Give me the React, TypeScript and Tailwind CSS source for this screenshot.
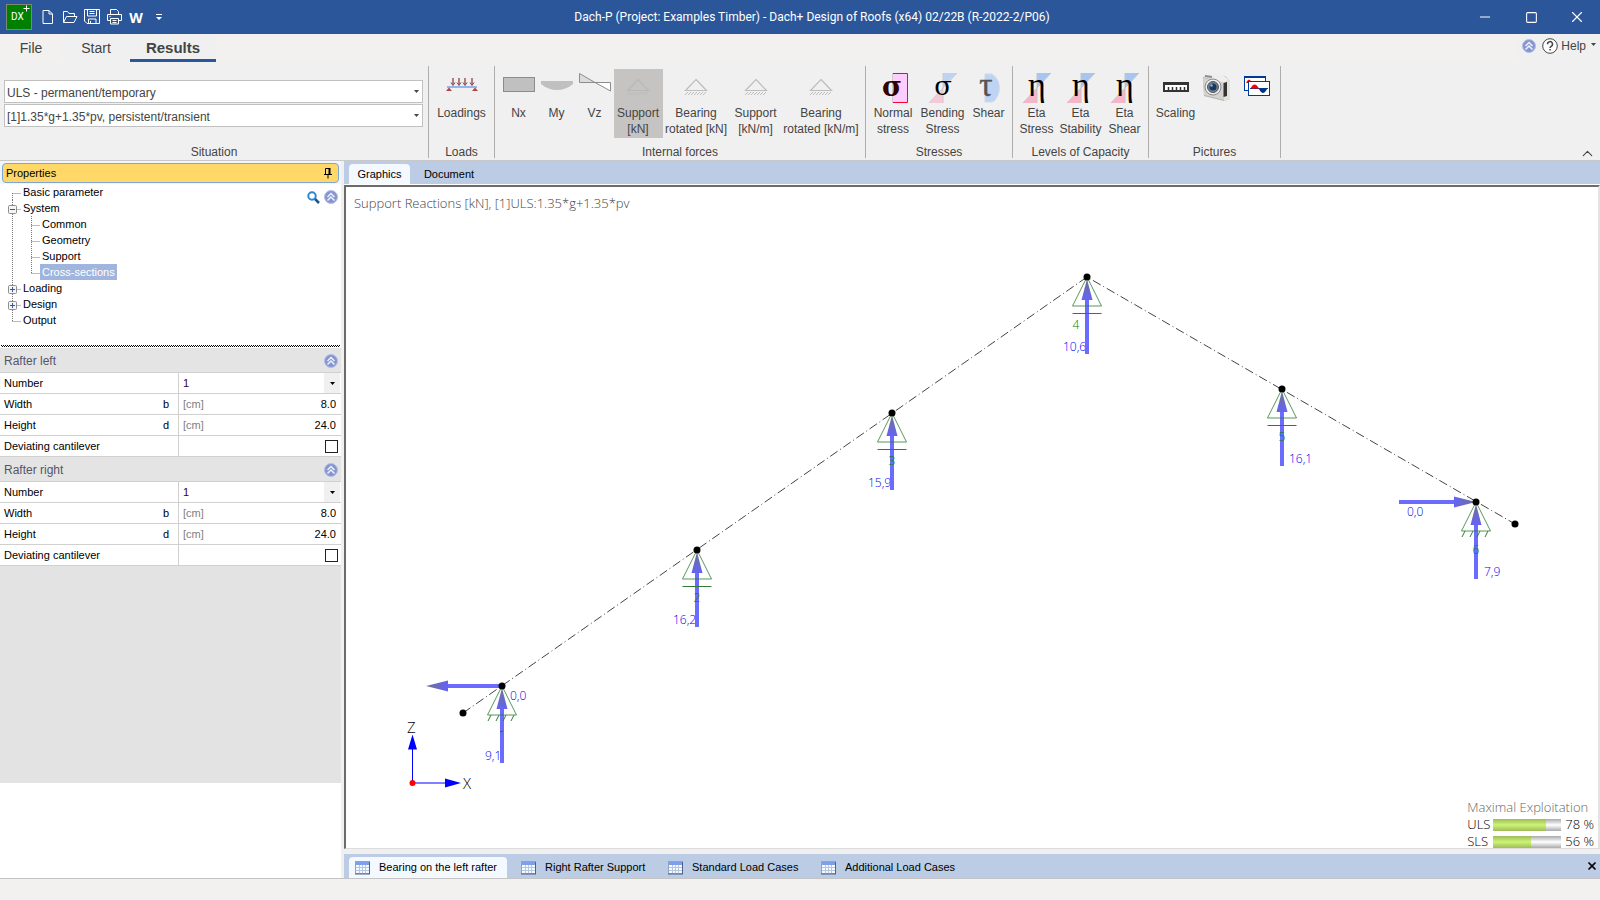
import React from 'react';
import { ChevronUp, Minus, Square, X } from 'lucide-react';

const Caret = ({ className = '' }: { className?: string }) => (
  <svg className={className} width="5" height="3" viewBox="0 0 5 3" aria-hidden="true">
    <path d="M0 0h5L2.5 3z" fill="currentColor" />
  </svg>
);

const CollapseBadge = () => (
  <svg width="14" height="14" viewBox="0 0 14 14" aria-hidden="true">
    <circle cx="7" cy="7" r="6.5" fill="#8a93cf" stroke="#a9c3e4" />
    <path d="M3.5 7L7 3.5 10.5 7M3.5 10.5L7 7l3.5 3.5" fill="none" stroke="#e8f4ff" strokeWidth="1.5" />
  </svg>
);

const TitleBar = () => (
  <header className="relative flex h-[34px] items-center bg-[#2b579a] text-white">
    <svg className="ml-1.5" width="26" height="26" viewBox="0 0 26 26" aria-hidden="true">
      <rect x="0.5" y="0.5" width="25" height="25" fill="#008000" stroke="#7b8a6b" />
      <text x="5" y="16" fontSize="10" fontFamily="Roboto, sans-serif" fill="#fff">DX</text>
      <path d="M20.5 1.5v6M17.5 4.5h6" stroke="#fff" />
    </svg>
    <nav className="ml-[5px] flex items-center" aria-label="Quick access">
      <button type="button" aria-label="New" className="flex w-[22px] justify-center">
        <svg width="12" height="16" viewBox="0 0 12 16" fill="none" stroke="#fff">
          <path d="M1 1.500h6l3.500 3.500v9.500H1zM7 1.500V5h3.500" />
        </svg>
      </button>
      <button type="button" aria-label="Open" className="flex w-[22px] justify-center">
        <svg width="16" height="14" viewBox="0 0 16 14" fill="none" stroke="#fff">
          <path d="M1.500 12.500v-11h4l1.500 2h5.500v3M1.500 12.500l3-6H15l-3 6z" />
        </svg>
      </button>
      <button type="button" aria-label="Save" className="flex w-[22px] justify-center">
        <svg width="16" height="16" viewBox="0 0 16 16" fill="none" stroke="#fff">
          <path d="M0.500 0.500h15v14H3l-2.500-2.500zM3.500 0.500v6.500h9v-6.500M4.500 14.500v-4.500h7.500v4.500M5.500 2.500h5M5.500 4.500h5M6.500 12v2" />
        </svg>
      </button>
      <button type="button" aria-label="Print" className="flex w-[22px] justify-center">
        <svg width="15" height="16" viewBox="0 0 15 16" fill="none" stroke="#fff">
          <path d="M3.500 5.500v-5h6l2 2v3M3.500 11.500h-3v-6h14v6h-3M3.500 9.500h8v5.500h-8zM5.500 11.500h4M5.500 13.500h4M2.500 7.500h1" />
        </svg>
      </button>
      <button type="button" className="w-[22px] text-center font-['Open_Sans',sans-serif] text-[14px] font-bold">W</button>
      <button type="button" aria-label="Customize" className="flex w-6 justify-center">
        <svg width="6" height="7" viewBox="0 0 6 7"><path d="M0 0h6v1H0zM0 3h6L3 6z" fill="#fff" /></svg>
      </button>
    </nav>
    <h1 className="pointer-events-none absolute inset-x-0 ml-6 text-center font-[Roboto,sans-serif] text-xs leading-8">
      Dach-P (Project: Examples Timber) - Dach+ Design of Roofs (x64) 02/22B (R-2022-2/P06)
    </h1>
    <div className="ml-auto flex items-center">
      <button type="button" aria-label="Minimize" className="flex w-[46px] justify-center"><Minus size={16} strokeWidth={1.5} /></button>
      <button type="button" aria-label="Maximize" className="flex w-[46px] justify-center"><Square size={13} strokeWidth={2} /></button>
      <button type="button" aria-label="Close" className="flex w-[46px] justify-center"><X size={18} strokeWidth={1.5} /></button>
    </div>
  </header>
);

const RibbonTabs = () => (
  <nav className="flex h-7 items-stretch bg-[#f3f1f0] text-sm" aria-label="Ribbon">
    <button type="button" className="w-[62px]">File</button>
    <button type="button" className="w-[68px] bg-[#f0f0f0]">Start</button>
    <button type="button" className="w-[86px] border-b-[3px] border-[#2b579a] bg-[#f0f0f0] pt-0.5 text-[15px] font-bold">Results</button>
    <div className="ml-auto flex items-start gap-1.5 bg-[#f0f0f0] px-1 pt-1">
      <button type="button" aria-label="Collapse all" className="mt-px"><CollapseBadge /></button>
      <button type="button" className="flex items-center gap-[3px] text-xs">
        <svg width="16" height="16" viewBox="0 0 16 16" fill="none" stroke="#444" aria-hidden="true">
          <circle cx="8" cy="8" r="7.300" fill="#fff" />
          <path d="M5.500 6.200a2.500 2.500 0 1 1 3.700 2.100c-.9.500-1.200.9-1.200 1.700M8 11v1.500" strokeWidth="1.500" />
        </svg>
        Help
        <Caret className="mb-1 ml-0.5" />
      </button>
    </div>
  </nav>
);

const LoadingsIcon = () => (
  <svg width="36" height="36" viewBox="0 0 36 36" aria-hidden="true">
    <path d="M9 9v6M15 9v6M21 9v6M28 9v6" stroke="#9a5a5a" strokeWidth="1.500" />
    <path d="M7 13.500l2 3 2-3M13 13.500l2 3 2-3M19 13.500l2 3 2-3M26 13.500l2 3 2-3" fill="none" stroke="#8c3a3a" />
    <path d="M3 18h30" stroke="#8fb8ee" strokeWidth="2" />
    <path d="M5 18.500l3 3.500H2zM31 18.500l3 3.500h-6z" fill="#b84545" />
  </svg>
);

const NxIcon = () => (
  <svg width="36" height="36" viewBox="0 0 36 36" aria-hidden="true">
    <rect x="2.500" y="8.500" width="31" height="14" fill="#c0c0c0" stroke="#8c8c8c" />
  </svg>
);

const MyIcon = () => (
  <svg width="36" height="36" viewBox="0 0 36 36" aria-hidden="true">
    <path d="M2 12h32v3c-5 4-10 6-16 6S7 19 2 15z" fill="#c0c0c0" />
  </svg>
);

const VzIcon = () => (
  <svg width="36" height="36" viewBox="0 0 36 36" fill="#dcdcdc" stroke="#8c8c8c" aria-hidden="true">
    <path d="M2.500 4.500L18 13.500H2.500z" />
    <path d="M18 13.500h15.500v8.500z" fill="#fff" />
  </svg>
);

const SupportIcon = ({ faint = false }: { faint?: boolean }) => (
  <svg width="36" height="36" viewBox="0 0 36 36" fill="none" stroke={faint ? '#b8b8b8' : '#bdbdbd'} aria-hidden="true">
    <path d="M18 10.500L28.500 21.500h-21z" strokeWidth="1.200" />
    <path d="M7 26l3-3M10 26l3-3M13 26l3-3M16 26l3-3M19 26l3-3M22 26l3-3M25 26l3-3" />
  </svg>
);

const NormalStressIcon = () => (
  <svg className="overflow-visible" width="36" height="36" viewBox="0 0 36 36" aria-hidden="true">
    <path d="M17 4.500h15.500v29H17" fill="#ffccff" stroke="#f03" />
    <path d="M17.500 4v30" stroke="#ccc" />
    <text x="17" y="27" fontSize="27" fontWeight="bold" textAnchor="middle" fontFamily="'DejaVu Serif', serif" fill="#300">σ</text>
  </svg>
);

const BendingStressIcon = () => (
  <svg className="overflow-visible" width="36" height="36" viewBox="0 0 36 36" aria-hidden="true">
    <path d="M18 4h14L18 19z" fill="#bed4f2" />
    <path d="M18 19v15H4z" fill="#f6c9d8" />
    <path d="M18 4v30M32 4L4 34" stroke="#ccc" />
    <text x="18" y="26" fontSize="26" textAnchor="middle" fontFamily="'DejaVu Serif', serif">σ</text>
  </svg>
);

const ShearStressIcon = () => (
  <svg className="overflow-visible" width="36" height="36" viewBox="0 0 36 36" aria-hidden="true">
    <path d="M14 5h7q9 6 7 18-3 9-7 10h-7z" fill="#bed4f2" stroke="#cdd9ea" />
    <text x="15" y="27" fontSize="33" textAnchor="middle" fontFamily="'Liberation Serif', serif" fill="#555" stroke="#555" strokeWidth="0.400">τ</text>
  </svg>
);

const EtaIcon = () => (
  <svg className="overflow-visible" width="36" height="36" viewBox="0 0 36 36" aria-hidden="true">
    <path d="M18 4h14L18 19z" fill="#a6c6f0" />
    <path d="M18 19v15H4z" fill="#f7b5ca" />
    <path d="M18 4v30M32 4L4 34" stroke="#c4c4c4" />
    <text x="18" y="27" fontSize="34" textAnchor="middle" fontFamily="'Liberation Serif', serif">η</text>
  </svg>
);

const RulerIcon = () => (
  <svg width="36" height="36" viewBox="0 0 36 36" aria-hidden="true">
    <rect x="6" y="14" width="24" height="8" fill="#fff" stroke="#333" strokeWidth="2" />
    <path d="M7 15.500h22" stroke="#333" />
    <path d="M10.500 22v-4M14.500 22v-4M18.500 22v-4M22.500 22v-4M26.500 22v-4" stroke="#333" strokeWidth="1.500" />
  </svg>
);

const CameraIcon = () => (
  <svg width="36" height="36" viewBox="0 0 36 36" aria-hidden="true">
    <path d="M4 8l3-3 19 2 4 4 1 19-6 2-20-5z" fill="#b3b1ae" />
    <path d="M4 9l20 3 1 19-20-5z" fill="#d5d3d0" />
    <path d="M24 12l7-1v19l-6 2z" fill="#e4e2df" />
    <path d="M4 8l3-4 17 2 6 5-6 2z" fill="#efeeec" />
    <path d="M6 6l7 1v2l-7-1z" fill="#8b8b8b" />
    <circle cx="14" cy="18" r="8" fill="#efefef" stroke="#888" />
    <circle cx="14" cy="18" r="5.500" fill="#777f88" stroke="#505860" />
    <circle cx="14" cy="18" r="3.500" fill="#17375b" />
    <circle cx="12.500" cy="16.500" r="1.300" fill="#7fb3e6" />
    <path d="M24.500 14l3.500-1v14l-3.500 1z" fill="#333" />
  </svg>
);

const DiagramsIcon = () => (
  <svg width="36" height="36" viewBox="0 0 36 36" aria-hidden="true">
    <rect x="6.500" y="7.500" width="21" height="14" fill="#fff" stroke="#003a9b" />
    <path d="M6 8h22" stroke="#003a9b" strokeWidth="2" />
    <path d="M8 14q3-7 6 0z" fill="#f00" />
    <rect x="10.500" y="12.500" width="21" height="14" fill="#fff" stroke="#003a9b" />
    <path d="M12 19.500h18" stroke="#003a9b" />
    <path d="M12.500 19.500q4-8 8.500 0z" fill="#f00" />
    <path d="M21 20q4 8 8 0z" fill="#00357c" />
  </svg>
);

interface RibbonButtonProps {
  width: string;
  icon: React.ReactNode;
  lines?: string[];
  label?: string;
  active?: boolean;
}

const RibbonButton = ({ width, icon, lines = [], label, active = false }: RibbonButtonProps) => (
  <button
    type="button"
    aria-label={label}
    className={`${width} ${active ? 'bg-[#c6c4c2]' : ''} flex h-[69px] flex-col items-center text-xs leading-4 whitespace-nowrap`}
  >
    {icon}
    {lines.map((line) => (
      <span key={line}>{line}</span>
    ))}
  </button>
);

const RibbonGroup = ({ title, width, children }: { title: string; width: string; children: React.ReactNode }) => (
  <section className={`${width} mt-1 mb-0.5 flex flex-col border-r border-[#b0adab]`}>
    <div className="flex flex-1 justify-center pt-[3px]">{children}</div>
    <h2 className="text-center text-xs leading-3">{title}</h2>
  </section>
);

const SituationSelect = ({ label, value }: { label: string; value: string }) => (
  <div className="relative">
    <select
      aria-label={label}
      className="block h-[23px] w-full appearance-none border border-[#c0c0c0] bg-white pt-0.5 pl-0.5 text-xs outline-none"
    >
      <option>{value}</option>
    </select>
    <Caret className="pointer-events-none absolute top-2.5 right-1" />
  </div>
);

const Ribbon = () => (
  <div className="relative flex h-[99px] border-b border-[#c8c8c8] bg-[#f0f0f0]">
    <RibbonGroup title="Situation" width="w-[429px]">
      <div className="flex w-full flex-col gap-px pt-[11px] pr-[5px] pl-1">
        <SituationSelect label="Situation" value="ULS - permanent/temporary" />
        <SituationSelect label="Combination" value="[1]1.35*g+1.35*pv, persistent/transient" />
      </div>
    </RibbonGroup>
    <RibbonGroup title="Loads" width="w-[66px]">
      <RibbonButton width="w-[58px]" icon={<LoadingsIcon />} lines={['Loadings']} />
    </RibbonGroup>
    <RibbonGroup title="Internal forces" width="w-[371px]">
      <RibbonButton width="w-[38px]" icon={<NxIcon />} lines={['Nx']} />
      <RibbonButton width="w-[38px]" icon={<MyIcon />} lines={['My']} />
      <RibbonButton width="w-[38px]" icon={<VzIcon />} lines={['Vz']} />
      <RibbonButton width="w-[49px]" icon={<SupportIcon faint />} lines={['Support', '[kN]']} active />
      <RibbonButton width="w-[67px]" icon={<SupportIcon />} lines={['Bearing', 'rotated [kN]']} />
      <RibbonButton width="w-[52px]" icon={<SupportIcon />} lines={['Support', '[kN/m]']} />
      <RibbonButton width="w-[79px]" icon={<SupportIcon />} lines={['Bearing', 'rotated [kN/m]']} />
    </RibbonGroup>
    <RibbonGroup title="Stresses" width="w-[147px]">
      <RibbonButton width="w-[46px]" icon={<NormalStressIcon />} lines={['Normal', 'stress']} />
      <RibbonButton width="w-[53px]" icon={<BendingStressIcon />} lines={['Bending', 'Stress']} />
      <RibbonButton width="w-[39px]" icon={<ShearStressIcon />} lines={['Shear']} />
    </RibbonGroup>
    <RibbonGroup title="Levels of Capacity" width="w-[136px]">
      <RibbonButton width="w-[40px]" icon={<EtaIcon />} lines={['Eta', 'Stress']} />
      <RibbonButton width="w-[48px]" icon={<EtaIcon />} lines={['Eta', 'Stability']} />
      <RibbonButton width="w-[40px]" icon={<EtaIcon />} lines={['Eta', 'Shear']} />
    </RibbonGroup>
    <RibbonGroup title="Pictures" width="w-[132px]">
      <RibbonButton width="w-[44px]" icon={<RulerIcon />} lines={['Scaling']} />
      <RibbonButton width="w-[38px]" icon={<CameraIcon />} label="Take picture" />
      <RibbonButton width="w-[40px]" icon={<DiagramsIcon />} label="Picture list" />
    </RibbonGroup>
    <button type="button" aria-label="Collapse ribbon" className="mr-1 ml-auto self-end">
      <ChevronUp className="block translate-y-0.5" size={17} strokeWidth={1.5} />
    </button>
  </div>
);

interface TreeItem {
  name: string;
  level: number;
  sign?: '+' | '-';
  first?: boolean;
  last?: boolean;
  selected?: boolean;
}

const treeItems: TreeItem[] = [
  { name: 'Basic parameter', level: 0, first: true },
  { name: 'System', level: 0, sign: '-' },
  { name: 'Common', level: 1 },
  { name: 'Geometry', level: 1 },
  { name: 'Support', level: 1 },
  { name: 'Cross-sections', level: 1, last: true, selected: true },
  { name: 'Loading', level: 0, sign: '+' },
  { name: 'Design', level: 0, sign: '+' },
  { name: 'Output', level: 0, last: true },
];

const TreeRow = ({ item }: { item: TreeItem }) => {
  const x = item.level === 0 ? 12.5 : 31.5;
  const width = item.level === 0 ? 21 : 40;
  return (
    <li className="flex h-4 items-center">
      <svg width={width} height="16" fill="none" stroke="#777" strokeDasharray="1 1" aria-hidden="true">
        {item.level === 1 && <path d="M12.500 0v16" />}
        <path d={`M${x} ${item.first ? 9 : 0}V${item.last ? 9 : 16}M${x} 9.500H${width}`} />
        {item.sign && (
          <g strokeDasharray="none">
            <rect x="8.500" y="5.500" width="8" height="8" rx="1" fill="#f4f4f4" stroke="#8e8e8e" />
            <path d={item.sign === '+' ? 'M10 9.500h5M12.500 7v5' : 'M10 9.500h5'} stroke="#3a55a0" />
          </g>
        )}
      </svg>
      <button
        type="button"
        className={`${item.selected ? 'bg-[#9fb5de] pr-0.5 text-white' : ''} h-4 pl-0.5 leading-4`}
      >
        {item.name}
      </button>
    </li>
  );
};

const RafterSection = ({ title, id }: { title: string; id: string }) => (
  <section>
    <div className="flex h-[25px] items-center justify-between border-b border-[#d0d0d0] bg-[#e4e4e4] pt-0.5 pr-[3px] pl-1">
      <h3 className="text-xs text-[#555566]">{title}</h3>
      <button type="button" aria-label={`Collapse ${title}`}><CollapseBadge /></button>
    </div>
    <table className="w-full table-fixed border-separate border-spacing-0 bg-white [&_td]:border-b [&_td]:border-[#d0d0d0] [&_th]:border-r [&_th]:border-b [&_th]:border-[#d0d0d0]">
      <tbody>
        <tr className="h-[21px]">
          <th scope="row" className="w-[179px] p-0 pl-1 text-left font-normal">
            <label htmlFor={`${id}-number`}>Number</label>
          </th>
          <td className="relative p-0">
            <select id={`${id}-number`} defaultValue="1" className="block h-5 w-full appearance-none pl-1 text-[#400020] outline-none">
              <option>1</option>
            </select>
            <span className="pointer-events-none absolute inset-y-0 right-px flex w-4 items-center justify-center bg-[#f0f0f0]"><Caret /></span>
          </td>
        </tr>
        {[
          { name: 'Width', symbol: 'b', value: '8.0' },
          { name: 'Height', symbol: 'd', value: '24.0' },
        ].map((row) => (
          <tr key={row.name} className="h-[21px]">
            <th scope="row" className="p-0 pr-[9px] pl-1 font-normal">
              <label htmlFor={`${id}-${row.symbol}`} className="flex justify-between">
                <span>{row.name}</span>
                <span>{row.symbol}</span>
              </label>
            </th>
            <td className="p-0 pr-[5px] pl-1">
              <div className="flex items-center">
                <span className="text-[#808080]">[cm]</span>
                <input id={`${id}-${row.symbol}`} defaultValue={row.value} className="block h-5 w-full min-w-0 text-right outline-none" />
              </div>
            </td>
          </tr>
        ))}
        <tr className="h-[21px]">
          <th scope="row" className="p-0 pl-1 text-left font-normal">
            <label htmlFor={`${id}-cantilever`}>Deviating cantilever</label>
          </th>
          <td className="p-0 pr-[3px]">
            <input id={`${id}-cantilever`} type="checkbox" className="ml-auto block size-[13px] appearance-none border border-[#222] bg-white" />
          </td>
        </tr>
      </tbody>
    </table>
  </section>
);

const PropertiesPanel = () => (
  <aside className="flex w-[341px] shrink-0 flex-col bg-white text-[11px] text-black">
    <div className="bg-[#f0f6fc] px-[2px] pt-[2px] pb-px">
      <div className="flex h-5 items-center justify-between rounded-sm border border-[#7fa5d8] bg-[#ffd868] pr-1.5 pl-[3px]">
        <h2>Properties</h2>
        <button type="button" aria-label="Pin panel">
          <svg width="8" height="11" viewBox="0 0 8 11" fill="none" stroke="#000">
            <path d="M1.500 6V0.500h4V6M0 6.500h8M4 7v3.500" />
            <path d="M5.500 0v6" strokeWidth="2" />
          </svg>
        </button>
      </div>
    </div>
    <div className="flex h-[161px] items-start justify-between">
      <ul className="flex-1">
        {treeItems.map((item) => (
          <TreeRow key={item.name} item={item} />
        ))}
      </ul>
      <div className="flex items-center gap-1 pt-1.5 pr-[3px]">
        <button type="button" aria-label="Search">
          <svg width="13" height="13" viewBox="0 0 13 13" fill="none">
            <circle cx="5" cy="5" r="3.700" stroke="#2f86cf" strokeWidth="2" />
            <path d="M8 8l4 4" stroke="#1d5591" strokeWidth="2.500" />
          </svg>
        </button>
        <button type="button" aria-label="Collapse tree"><CollapseBadge /></button>
      </div>
    </div>
    <svg className="mb-px block w-full" height="2" aria-hidden="true">
      <path d="M1 0.500h339" stroke="#000" strokeDasharray="1 1" />
      <path d="M2 1.500h338" stroke="#000" strokeDasharray="1 1" />
    </svg>
    <div className="h-[435px] bg-[#e3e3e3]">
      <RafterSection title="Rafter left" id="left" />
      <RafterSection title="Rafter right" id="right" />
    </div>
  </aside>
);

interface RoofNode {
  id: number;
  x: number;
  y: number;
  value: string;
  valueX: number;
  idX: number;
  fixed?: boolean;
}

const nodes: RoofNode[] = [
  { id: 1, x: 502, y: 686, value: '9,1', valueX: -17, idX: 0, fixed: true },
  { id: 2, x: 697, y: 550, value: '16,2', valueX: -24, idX: 0 },
  { id: 3, x: 892, y: 413, value: '15,9', valueX: -24, idX: 0 },
  { id: 4, x: 1087, y: 277, value: '10,6', valueX: -24, idX: -11 },
  { id: 5, x: 1282, y: 389, value: '16,1', valueX: 7, idX: 0 },
  { id: 6, x: 1476, y: 502, value: '7,9', valueX: 8, idX: 0, fixed: true },
];

const Reaction = ({ node }: { node: RoofNode }) => (
  <g transform={`translate(${node.x} ${node.y})`}>
    <text x={node.valueX} y="74" fill="#0000f0">{node.value}</text>
    <path d="M0 22v55" stroke="#6b6bff" strokeWidth="4" />
    <path d="M0 2l5.500 21h-11z" fill="url(#head)" />
    <path d="M0 0l14.500 29h-29z" fill="none" stroke="#2e7d32" strokeOpacity="0.800" />
    {node.fixed ? (
      <path d="M-11 29l-3 6M-3 29l-3 6M4 29l-3 6M12 29l-3 6" stroke="#2e7d32" />
    ) : (
      <path d="M-14.500 36.500h29" stroke="#2e7d32" />
    )}
    {node.id === 1 ? (
      <path d="M-2 46l3-1" stroke="#0a7d0a" />
    ) : (
      <text x={node.idX} y="52" textAnchor="middle" fill="#008000">{node.id}</text>
    )}
    <circle r="3.500" />
  </g>
);

const RoofDiagram = () => (
  <svg
    className="absolute inset-0 h-full w-full"
    viewBox="346 187 1252 655"
    preserveAspectRatio="xMinYMin meet"
    fontFamily="'Open Sans', sans-serif"
    fontSize="12"
    fontWeight="300"
    role="img"
    aria-label="Support reactions of the roof"
  >
    <defs>
      <linearGradient id="head" x1="0" y1="0" x2="0" y2="1">
        <stop offset="0" stopColor="#707090" />
        <stop offset="1" stopColor="#6464f4" />
      </linearGradient>
      <linearGradient id="headLeft" x1="0" y1="0" x2="1" y2="0">
        <stop offset="0" stopColor="#707090" />
        <stop offset="1" stopColor="#6464f4" />
      </linearGradient>
      <linearGradient id="headRight" x1="1" y1="0" x2="0" y2="0">
        <stop offset="0" stopColor="#707090" />
        <stop offset="1" stopColor="#6464f4" />
      </linearGradient>
    </defs>
    <path d="M463 713L1087 277 1515 524" fill="none" stroke="#444" strokeDasharray="9 3 1 3" />
    <path d="M448 686h54M1399 502h60" stroke="#6b6bff" strokeWidth="4" />
    <path d="M426 686l22-5.500v11z" fill="url(#headLeft)" />
    <path d="M1476 502l-22-5.500v11z" fill="url(#headRight)" />
    {nodes.map((node) => (
      <Reaction key={node.id} node={node} />
    ))}
    <circle cx="463" cy="713" r="3.500" />
    <circle cx="1515" cy="524" r="3.500" />
    <text x="510" y="700" fill="#0000f0">0,0</text>
    <text x="1407" y="516" fill="#0000f0">0,0</text>
    <path d="M412.500 783v-36M412 783h36" stroke="#00f" />
    <path d="M412.500 734.500l4.500 15h-9zM461 783l-16-4.500v9z" fill="#00f" />
    <circle cx="412.500" cy="783" r="3" fill="red" />
    <text x="407" y="733" fontSize="15">Z</text>
    <text x="463" y="789" fontSize="15">X</text>
  </svg>
);

const Exploitation = () => (
  <div className="absolute right-1 -bottom-0.5 font-['Open_Sans',sans-serif] text-[13px] leading-[17px] font-light text-black">
    <h3 className="text-[#666]">Maximal Exploitation</h3>
    {[
      { name: 'ULS', percent: 78 },
      { name: 'SLS', percent: 56 },
    ].map((row) => (
      <div key={row.name} className="flex items-center">
        <span className="w-[26px]">{row.name}</span>
        <div className="h-3 w-[68px] bg-linear-to-b from-[#aaa] via-[#fff] to-[#aaa]">
          <div className="h-full bg-linear-to-b from-[#a0bb58] via-[#ccf576] to-[#a0bb58]" style={{ width: `${row.percent}%` }} />
        </div>
        <span className="ml-1">{row.percent} %</span>
      </div>
    ))}
  </div>
);

const TableIcon = () => (
  <svg width="16" height="14" viewBox="0 0 16 14" aria-hidden="true">
    <rect x="0.500" y="0.500" width="14" height="12" fill="#f6faff" stroke="#8ea3c8" />
    <path d="M1 1h13v3H1z" fill="#7da0ea" />
    <path d="M1 6.500h13M1 9.500h13M4.500 4v9M7.500 4v9M10.500 4v9" stroke="#b6c6e0" />
    <path d="M0 13h15M14.500 1v12" stroke="#4d6288" />
  </svg>
);

const Workspace = () => (
  <main className="flex min-w-0 flex-1 flex-col text-[11px] text-black">
    <nav className="flex h-6 items-end border-b border-white bg-[#bbcce4] pl-[5px]" aria-label="Views">
      <button type="button" className="h-5 w-[61px] rounded-t bg-[#f4f9ff]">Graphics</button>
      <button type="button" className="h-5 w-[78px]">Document</button>
    </nav>
    <div className="relative min-h-[400px] flex-1 border-t-2 border-r-2 border-b border-l-2 border-t-[#6b6b6b] border-r-[#e3e3e3] border-b-[#dcdcdc] border-l-[#6b6b6b] bg-white">
      <RoofDiagram />
      <h2 className="absolute top-[7px] left-2 font-['Open_Sans',sans-serif] text-[13px] font-light text-[#444]">
        Support Reactions [kN], [1]ULS:1.35*g+1.35*pv
      </h2>
      <Exploitation />
    </div>
    <nav className="mt-[5px] flex h-6 items-end bg-[#bbcce4] pl-[5px]" aria-label="Tables">
      <button type="button" className="flex h-[21px] w-[158px] items-center gap-2 rounded-t bg-[#f4f9ff] pl-1.5"><TableIcon />Bearing on the left rafter</button>
      <button type="button" className="flex h-[21px] w-[147px] items-center gap-2 pl-3.5"><TableIcon />Right Rafter Support</button>
      <button type="button" className="flex h-[21px] w-[153px] items-center gap-2 pl-3.5"><TableIcon />Standard Load Cases</button>
      <button type="button" className="flex h-[21px] items-center gap-2 pl-3.5"><TableIcon />Additional Load Cases</button>
      <button type="button" aria-label="Close tables" className="mr-0.5 mb-1.5 ml-auto"><X size={12} strokeWidth={3.5} /></button>
    </nav>
  </main>
);

const App = () => (
  <div className="flex min-h-screen flex-col bg-[#f0f0f0] font-['Liberation_Sans',sans-serif] text-[#444]">
    <TitleBar />
    <RibbonTabs />
    <Ribbon />
    <div className="flex flex-1 gap-[3px]">
      <PropertiesPanel />
      <Workspace />
    </div>
    <footer className="h-[22px] border-t border-[#c4c4c4] bg-[#f2f1f0]" />
  </div>
);

export default App;
